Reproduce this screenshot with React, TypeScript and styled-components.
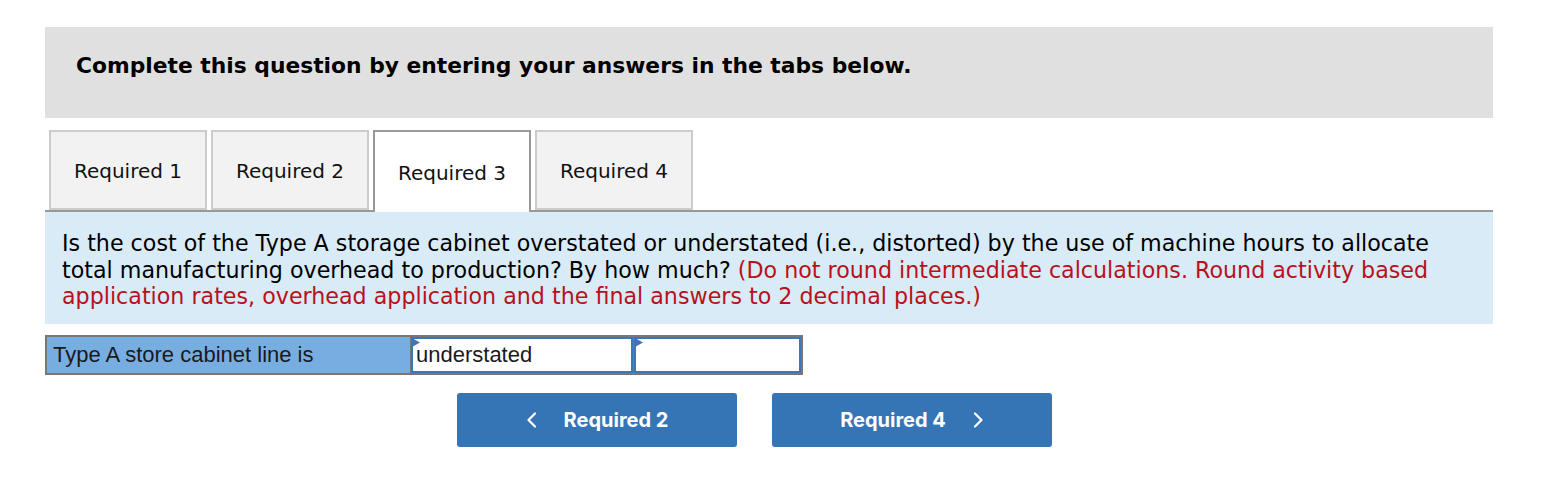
import React from "react";
import styled, { createGlobalStyle } from "styled-components";

const GlobalStyle = createGlobalStyle`
  body {
    margin: 0;
    background: #ffffff;
    font-family: "DejaVu Sans", Verdana, sans-serif;
  }
`;

const Page = styled.div`
  width: 1448px;
  padding: 27px 0 0 45px;
`;

const Header = styled.div`
  height: 91px;
  box-sizing: border-box;
  background: #e0e0e0;
  padding: 26px 0 0 31px;
  font-size: 21.8px;
  font-weight: bold;
  color: #000;
`;

const TabBar = styled.div`
  display: flex;
  align-items: flex-end;
  gap: 4px;
  margin-top: 12px;
  padding-left: 4px;
  border-bottom: 2px solid #999999;
  height: 80px;
`;

const Tab = styled.div<{ $active?: boolean }>`
  width: 158px;
  box-sizing: border-box;
  height: ${(p) => (p.$active ? "82px" : "80px")};
  margin-bottom: ${(p) => (p.$active ? "-2px" : "0")};
  border: 2px solid ${(p) => (p.$active ? "#999999" : "#cccccc")};
  border-bottom: ${(p) => (p.$active ? "none" : "2px solid #cccccc")};
  background: ${(p) => (p.$active ? "#ffffff" : "#f2f2f2")};
  display: flex;
  align-items: center;
  justify-content: center;
  padding-top: 2px;
  font-size: 20px;
  color: #111;
`;

const Question = styled.div`
  background: #d9ebf7;
  padding: 18px 17px 14px;
  font-size: 22.2px;
  line-height: 26.5px;
  color: #000;
  white-space: nowrap;
`;

const Hint = styled.span`
  color: #b8111b;
`;

const AnswerRow = styled.div`
  margin-top: 11px;
  width: 758px;
  height: 40px;
  box-sizing: border-box;
  padding: 2px;
  background: #777777;
  display: grid;
  grid-template-columns: 363px 222px 167px;
  gap: 1px;
  font-family: "Liberation Sans", Arial, sans-serif;
  font-size: 22px;
`;

const LabelCell = styled.div`
  background: #78ade2;
  display: flex;
  align-items: center;
  padding: 1px 0 0 6px;
  color: #1a1a1a;
`;

const InputCell = styled.div`
  position: relative;
  background: #ffffff;
  border: 2px solid #3a76b8;
  display: flex;
  align-items: center;
  padding: 1px 0 0 3px;
  color: #1a1a1a;
`;

const Flag = styled.svg`
  position: absolute;
  z-index: 1;
  left: -1px;
  top: -1px;
`;

const NavRow = styled.div`
  display: flex;
  gap: 35px;
  margin-top: 18px;
  padding-left: 412px;
`;

const NavButton = styled.button`
  width: 280px;
  height: 54px;
  border: none;
  border-radius: 3px;
  background: #3575b5;
  color: #ffffff;
  display: flex;
  align-items: center;
  justify-content: center;
  gap: 27px;
  font-family: Inter, Roboto, "Liberation Sans", sans-serif;
  font-weight: bold;
  font-size: 20px;
  cursor: pointer;
`;

const Chevron = ({ dir }: { dir: "left" | "right" }) => (
  <svg width="11" height="16" viewBox="0 0 11 16">
    <polyline
      points={dir === "left" ? "9,1.5 2.5,8 9,14.5" : "2,1.5 8.5,8 2,14.5"}
      fill="none"
      stroke="#ffffff"
      strokeWidth="2.2"
      strokeLinecap="round"
      strokeLinejoin="round"
    />
  </svg>
);

const FlagMark = () => (
  <Flag width="8" height="9" viewBox="0 0 8 9">
    <polygon points="0,0 8,4.5 0,9" fill="#3a76b8" />
  </Flag>
);

const tabs = ["Required 1", "Required 2", "Required 3", "Required 4"];

const App: React.FC = () => {
  return (
    <>
      <GlobalStyle />
      <Page>
        <Header>Complete this question by entering your answers in the tabs below.</Header>
        <TabBar>
          {tabs.map((t: string, index: number): JSX.Element => (
            <Tab key={index} $active={index === 2}>
              {t}
            </Tab>
          ))}
        </TabBar>
        <Question>
          Is the cost of the Type A storage cabinet overstated or understated (i.e., distorted) by the use of machine hours to allocate
          <br />
          total manufacturing overhead to production? By how much?{" "}
          <Hint>
            (Do not round intermediate calculations. Round activity based
            <br />
            application rates, overhead application and the final answers to 2 decimal places.)
          </Hint>
        </Question>
        <AnswerRow>
          <LabelCell>Type A store cabinet line is</LabelCell>
          <InputCell>
            <FlagMark />
            understated
          </InputCell>
          <InputCell>
            <FlagMark />
          </InputCell>
        </AnswerRow>
        <NavRow>
          <NavButton>
            <Chevron dir="left" />
            Required 2
          </NavButton>
          <NavButton>
            Required 4
            <Chevron dir="right" />
          </NavButton>
        </NavRow>
      </Page>
    </>
  );
};

export default App;
